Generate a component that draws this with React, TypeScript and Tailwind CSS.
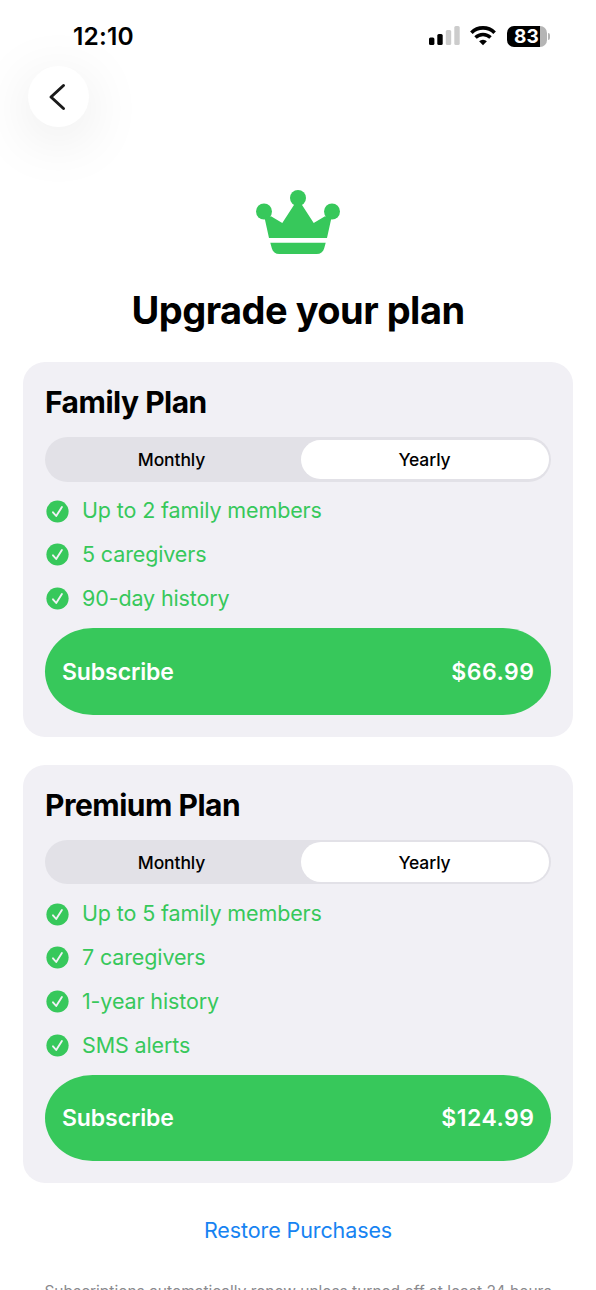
import React, { useState } from 'react';
import clsx from 'clsx';

type Period = 'Monthly' | 'Yearly';

interface Plan {
  name: string;
  features: string[];
  prices: Record<Period, string>;
}

const plans: Plan[] = [
  {
    name: 'Family Plan',
    features: ['Up to 2 family members', '5 caregivers', '90-day history'],
    prices: { Monthly: '$6.99', Yearly: '$66.99' },
  },
  {
    name: 'Premium Plan',
    features: ['Up to 5 family members', '7 caregivers', '1-year history', 'SMS alerts'],
    prices: { Monthly: '$12.99', Yearly: '$124.99' },
  },
];

const StatusBar: React.FC = () => (
  <div className="flex h-[62px] items-center justify-between pl-[73px] pr-[46px] pt-[10px]">
    <span className="text-[24.5px] font-semibold tracking-[0.2px] leading-none">12:10</span>
    <div className="flex items-center">
      <svg width="32" height="20" viewBox="0 0 32 20" className="mr-[9px]">
        <rect x="0" y="11.5" width="5.4" height="7.5" rx="1.5" />
        <rect x="8.3" y="8" width="5.4" height="11" rx="1.5" />
        <rect x="16.8" y="4" width="5.4" height="15" rx="1.5" fill="#cccccc" />
        <rect x="25.3" y="0" width="5.4" height="19" rx="1.5" fill="#cccccc" />
      </svg>
      <svg width="26" height="20" viewBox="0 0 26 20" className="mr-[11px]" fill="none" stroke="#000">
        <path d="M1.4 6.7a16.6 16.6 0 0 1 23.2 0" strokeWidth="3.7" />
        <path d="M5.5 11.6a10.8 10.8 0 0 1 15 0" strokeWidth="3.500" />
        <path d="M13 19.200l-3.900-3.900a5.500 5.500 0 0 1 7.800 0z" fill="#000" stroke="none" />
      </svg>
      <div className="flex items-center gap-[1px]">
        <div className="flex h-[21px] w-[40px] items-center justify-center rounded-[7px] bg-linear-to-r from-black from-83% to-[#b5b5b5] to-83% text-[19px] font-bold leading-none tracking-[0.3px] text-white">
          83
        </div>
        <div className="h-[7px] w-[2.5px] rounded-r-full bg-[#b5b5b5]" />
      </div>
    </div>
  </div>
);

const Crown: React.FC = () => (
  <svg width="84" height="64" viewBox="0 0 84 64" fill="#37c85b" className="mx-auto">
    <circle cx="42" cy="8" r="8" />
    <circle cx="8" cy="21.5" r="8" />
    <circle cx="76" cy="21.5" r="8" />
    <path d="M8.6 28 15 26.2 26.3 32.9 38.6 14h6.8L57.7 32.9 69 26.2l6.4 1.8L71 48H13z" />
    <path d="M14.3 52.7h55.4l-1.5 5.500c-1 3.900-3.600 5.800-7.600 5.800H23.400c-4 0-6.600-1.900-7.600-5.800z" />
  </svg>
);

const CheckIcon: React.FC = () => (
  <svg width="23" height="23" viewBox="0 0 23 23" fill="none" className="shrink-0">
    <circle cx="11.5" cy="11.5" r="11.1" fill="#37c85b" />
    <path d="m7 12.3 3.200 3.700 5.700-8.900" stroke="#f2f1f6" strokeWidth="1.900" strokeLinecap="round" strokeLinejoin="round" />
  </svg>
);

const PlanCard: React.FC<{ plan: Plan }> = ({ plan }) => {
  const [period, setPeriod] = useState<Period>('Yearly');

  return (
    <section className="flex flex-col gap-[15px] rounded-[22px] bg-[#f1f0f5] p-[22px]">
      <h2 className="h-[38px] text-[30px] font-bold leading-[37px] tracking-[-0.5px]">{plan.name}</h2>

      {/* Abrechnungszeitraum */}
      <div className="flex h-[44.5px] gap-[5px] rounded-full bg-[#e2e1e7] p-[2.5px]">
        {(['Monthly', 'Yearly'] as Period[]).map((p) => (
          <button
            key={p}
            onClick={() => setPeriod(p)}
            className={clsx(
              'flex-1 rounded-full pt-[1px] text-[17.5px] font-medium leading-none tracking-[-0.1px]',
              p === period && 'bg-white'
            )}
          >
            {p}
          </button>
        ))}
      </div>

      <ul className="flex flex-col gap-[15px] text-[#37c85b]">
        {plan.features.map((feature) => (
          <li key={feature} className="flex h-[28.8px] items-center gap-[13px] pl-[1px] pt-[0.5px] text-[21.5px] leading-none tracking-[-0.13px]">
            <CheckIcon />
            {feature}
          </li>
        ))}
      </ul>

      <button className="flex h-[86.8px] items-center justify-between rounded-[48px/43.400px] bg-[#37c85b] px-[17px] pt-[1.5px] text-[23px] font-semibold leading-none text-white">
        <span className="tracking-[-0.1px]">Subscribe</span>
        <span className="mr-[-0.5px] tracking-[0.5px]">{plan.prices[period]}</span>
      </button>
    </section>
  );
};

const App: React.FC = () => (
  <div className="h-[1290px] w-[596px] overflow-hidden bg-white font-['Inter',sans-serif] text-black">
    <StatusBar />

    <header className="pl-[28px] pt-[4px]">
      <button className="flex size-[61px] items-center justify-center rounded-full bg-white shadow-[0_12px_60px_rgba(0,0,0,0.1)]">
        <svg width="18" height="28" viewBox="0 0 18 28" fill="none" stroke="#1a1a1a" strokeWidth="3" strokeLinecap="round" strokeLinejoin="round" className="mr-[4px]">
          <path d="M15.5 2.5 3 14l12.5 11.5" />
        </svg>
      </button>
    </header>

    <main className="px-[23px] pt-[63px]">
      <Crown />
      <h1 className="mt-[32px] h-[48px] text-center text-[38px] font-bold leading-[48px] tracking-[-0.52px]">Upgrade your plan</h1>

      <div className="mt-[28px] flex flex-col gap-[28.2px]">
        {plans.map((plan) => (
          <PlanCard key={plan.name} plan={plan} />
        ))}
      </div>

      <button className="mx-auto mt-[33px] block h-[28px] text-[21.5px] leading-[28px] tracking-[-0.1px] text-[#1683f2]">Restore Purchases</button>

      <p className="mx-[-20px] mt-[38px] text-center text-[15.5px] leading-[20px] text-[#8a8a8e]">
        Subscriptions automatically renew unless turned off at least 24 hours
      </p>
    </main>
  </div>
);

export default App;
